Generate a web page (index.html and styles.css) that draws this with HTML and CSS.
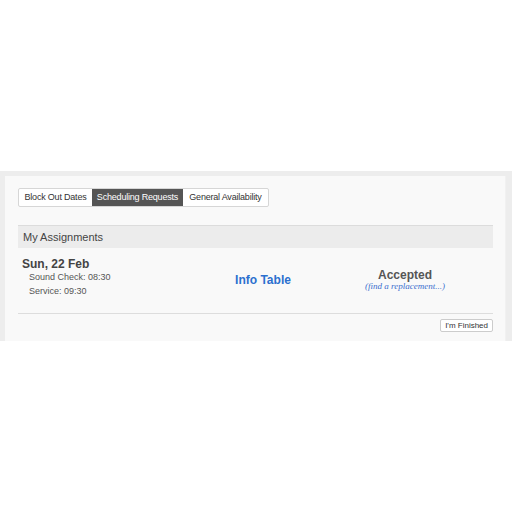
FILE: index.html
```html
<!DOCTYPE html>
<html lang="en">
<head>
  <meta charset="UTF-8">
  <title>Scheduling Requests</title>
  <link rel="stylesheet" href="styles.css">
</head>
<body>

<div class="frame">
  <div class="panel">
    <div class="tabs">
      <div class="tab tab-block">Block Out Dates</div>
      <div class="tab tab-requests active">Scheduling Requests</div>
      <div class="tab tab-general">General Availability</div>
    </div>

    <div class="section-head">My Assignments</div>

    <div class="assignment">
      <div class="when">
        <div class="date">Sun, 22 Feb</div>
        <div class="time">Sound Check: 08:30</div>
        <div class="time">Service: 09:30</div>
      </div>
      <div class="where"><a href="#">Info Table</a></div>
      <div class="status">
        <div class="state">Accepted</div>
        <a class="replace" href="#">(find a replacement...)</a>
      </div>
    </div>

    <div class="actions">
      <button>I'm Finished</button>
    </div>
  </div>
</div>

</body>
</html>
```

FILE: styles.css
```css
body { margin: 0; background: #fff; font-family: 'Liberation Sans', Arial, sans-serif; }
.frame { margin-top: 171px; background: #ededed; padding: 5px 0 0 5px; }
.panel { box-sizing: border-box; background: #f9f9f9; height: 165px; padding: 12px 12px 0 13px; border-right: 1px solid #f1f1f1; margin-right: 6px; }
.tabs { display: flex; width: 249px; border: 1px solid #d6d6d6; border-radius: 2px; background: #fff; }
.tab { font-size: 9px; color: #333; padding: 4px 0; line-height: 9px; letter-spacing: -0.2px; white-space: nowrap; text-align: center; }
.tab-block { width: 73px; }
.tab-requests { width: 91px; }
.tab-general { width: 85px; }
.tab.active { background: #555; color: #fff; }
.section-head {
  margin-top: 18px; height: 22px; line-height: 22px;
  background: #ececec; border-top: 1px solid #dcdcdc;
  font-size: 11px; color: #444; padding-left: 5px;
}
.assignment { display: flex; align-items: flex-start; padding: 9px 0 0 4px; height: 56px; border-bottom: 1px solid #ddd; }
.when { width: 190px; }
.date { font-size: 12px; font-weight: bold; color: #444; line-height: 14px; }
.time { font-size: 9px; color: #555; margin-left: 7px; line-height: 12px; }
.time + .time { margin-top: 2px; }
.where { width: 102px; text-align: center; padding-top: 13px; }
.where a { font-size: 12px; font-weight: bold; color: #2b70cf; text-decoration: none; }
.status { flex: 1; text-align: center; padding-top: 12px; padding-left: 3px; }
.state { font-size: 12px; font-weight: bold; color: #555; line-height: 12px; }
.replace { display: block; line-height: 10px; font-family: 'Liberation Serif', serif; font-style: italic; font-size: 9px; color: #3a6fce; text-decoration: none; }
.actions { display: flex; justify-content: flex-end; padding-top: 5px; }
.actions button {
  font-family: 'Liberation Sans', Arial, sans-serif; font-size: 8px; color: #333;
  background: #fff; border: 1px solid #ccc; border-radius: 2px; padding: 1px 4px; line-height: 9px;
}
```
